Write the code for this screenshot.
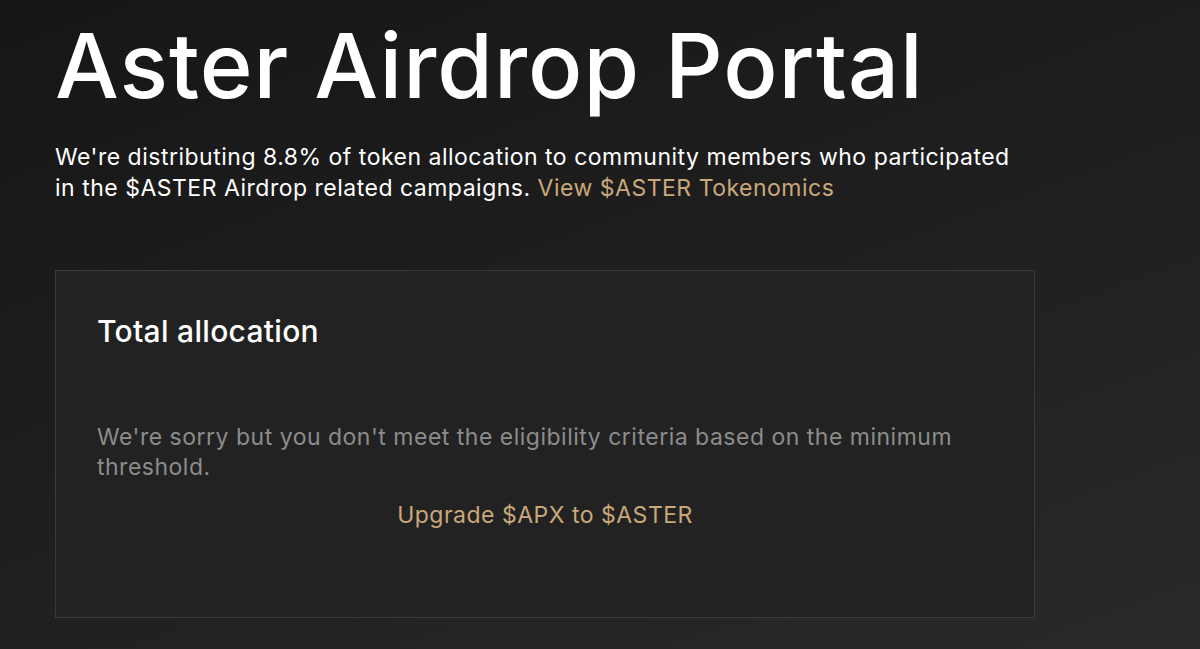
export default function App() {
  return (
    <div
      className="w-[1200px] h-[649px] overflow-hidden bg-[linear-gradient(160deg,#161616_0%,#1e1e1e_45%,#2b282b_100%)] text-white"
      style={{ fontFamily: 'Inter, "Noto Sans", sans-serif' }}
    >
      <div className="pl-[55px] pt-[11px]">
        <h1 className="text-[90px] leading-[110px] font-medium tracking-[1px]">Aster Airdrop Portal</h1>
        <p className="mt-[21px] w-[1040px] text-[23px] leading-[31px] tracking-[0.5px] text-white">
          We're distributing 8.8% of token allocation to community members who participated
          <br />
          in the $ASTER Airdrop related campaigns. <span className="text-[#c9a87a]">View $ASTER Tokenomics</span>
        </p>
        <div className="mt-[66px] w-[980px] h-[348px] border border-[#3a3a3a] bg-[#222222] px-[41px] pt-[42px]">
          <h2 className="text-[30px] leading-[36px] font-medium tracking-[0.3px] text-white">Total allocation</h2>
          <p className="mt-[73px] text-[23px] leading-[30px] tracking-[0.5px] text-[#8c8c8c]">
            We're sorry but you don't meet the eligibility criteria based on the minimum
            <br />
            threshold.
          </p>
          <div className="mt-[18px] text-center text-[23px] leading-[30px] tracking-[0.5px] text-[#c9a87a]">
            Upgrade $APX to $ASTER
          </div>
        </div>
      </div>
    </div>
  )
}
